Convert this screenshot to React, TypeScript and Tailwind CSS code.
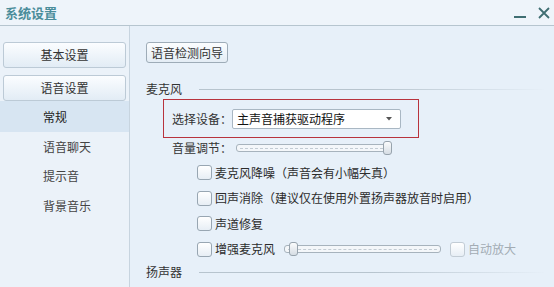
import React from 'react';

const font = { fontFamily: '"Noto Sans CJK SC", "Noto Sans", sans-serif' };

function Slider({ width, thumb }: { width: number; thumb: number }) {
  return (
    <div className="relative h-[14px] flex items-center" style={{ width }}>
      <div className="w-full h-[8px] rounded-[3px] border border-[#a7b3bd] bg-[#f4f7fa] flex items-center px-[3px]">
        <div className="w-full border-t border-dashed border-[#c3ccd4]" />
      </div>
      <div
        className="absolute top-0 w-[9px] h-[14px] rounded-[3px] border border-[#97a3ad] bg-gradient-to-b from-[#fbfcfd] to-[#d6dde4]"
        style={{ left: thumb }}
      />
    </div>
  );
}

function Check({ label, disabled }: { label: string; disabled?: boolean }) {
  return (
    <div className="flex items-center">
      <div
        className={
          'w-[15px] h-[15px] rounded-[3px] border bg-gradient-to-b from-white to-[#e7eef5] ' +
          (disabled ? 'border-[#c2ccd5]' : 'border-[#98a6b2]')
        }
      />
      <span className={'ml-[3px] text-[12px] leading-[16px] ' + (disabled ? 'text-[#a3acb4]' : 'text-[#2c2c2c]')}>
        {label}
      </span>
    </div>
  );
}

function SectionHead({ label }: { label: string }) {
  return (
    <div className="flex items-center h-[16px]">
      <span className="text-[12px] leading-[16px] text-[#333]">{label}</span>
      <div className="ml-[17px] mr-[10px] flex-1 h-px bg-gradient-to-r from-[#b7c4ce] via-[#b7c4ce] to-[#e6eff8]" />
    </div>
  );
}

export default function App() {
  return (
    <div className="w-[554px] h-[287px] overflow-hidden bg-[#e7f0f9] flex flex-col" style={font}>
      {/* title bar */}
      <div className="h-[26px] shrink-0 flex items-center justify-between pl-[5px] pr-[3px] bg-[#eef4fa] border-b border-[#b6c5cf]">
        <span className="text-[13px] font-bold text-[#4b8d9a] leading-none">系统设置</span>
        <div className="flex items-center gap-[11px] text-[#3f6e72]">
          <div className="w-[12px] h-[2px] bg-[#3f6e72] mt-[8px]" />
          <svg width="14" height="14" viewBox="0 0 14 14">
            <path d="M2 2 L12 12 M12 2 L2 12" stroke="#3f6e72" strokeWidth="1.8" />
          </svg>
        </div>
      </div>

      <div className="flex flex-1">
        {/* sidebar */}
        <div className="w-[130px] shrink-0 border-r border-[#c7d4df] bg-[#ebf2f9] pt-[16px] flex flex-col">
          <div className="mx-[3px] h-[26px] rounded-[3px] border border-[#bccad6] bg-gradient-to-b from-[#fbfdff] to-[#e2ecf5] flex items-center justify-center text-[12px] text-[#333]">
            基本设置
          </div>
          <div className="mx-[3px] mt-[7px] h-[26px] rounded-[3px] border border-[#bccad6] bg-gradient-to-b from-[#fbfdff] to-[#e2ecf5] flex items-center justify-center text-[12px] text-[#333]">
            语音设置
          </div>
          <div className="h-[31px] bg-[#d7e5f2] flex items-center pl-[43px] text-[12px] text-[#222]">常规</div>
          {['语音聊天', '提示音', '背景音乐'].map((t) => (
            <div key={t} className="h-[29.5px] flex items-center pl-[43px] text-[12px] text-[#444]">
              {t}
            </div>
          ))}
        </div>

        {/* content */}
        <div className="flex-1 pl-[16px] pt-[16px] flex flex-col">
          <div className="self-start h-[21px] px-[4px] rounded-[3px] border border-[#9eacb8] bg-gradient-to-b from-[#fbfdff] to-[#e4edf5] flex items-center text-[12px] text-[#333]">
            语音检测向导
          </div>

          <div className="mt-[18px]">
            <SectionHead label="麦克风" />
          </div>

          <div className="mt-[2px] ml-[17px] w-[256px] h-[39px] border border-[#b8333d] flex items-center pl-[8px]">
            <span className="w-[60px] text-[12px] text-[#333]">选择设备：</span>
            <div className="w-[169px] h-[20px] rounded-[2px] border border-[#a9b7c3] bg-white flex items-center justify-between pl-[4px] pr-[8px]">
              <span className="text-[12px] text-[#111]">主声音捕获驱动程序</span>
              <svg width="6" height="4" viewBox="0 0 6 4">
                <path d="M0 0 H6 L3 3.5 Z" fill="#555" />
              </svg>
            </div>
          </div>

          <div className="mt-[2px] ml-[26px] flex items-center h-[16px]">
            <span className="w-[64px] text-[12px] text-[#333]">音量调节：</span>
            <Slider width={156} thumb={147} />
          </div>

          <div className="mt-[4px] ml-[51px] flex flex-col">
            <div className="h-[25.5px] flex items-center">
              <Check label="麦克风降噪（声音会有小幅失真）" />
            </div>
            <div className="h-[25.5px] flex items-center">
              <Check label="回声消除（建议仅在使用外置扬声器放音时启用）" />
            </div>
            <div className="h-[25.5px] flex items-center">
              <Check label="声道修复" />
            </div>
            <div className="h-[25.5px] flex items-center">
              <Check label="增强麦克风" />
              <div className="ml-[9px]">
                <Slider width={157} thumb={5} />
              </div>
              <div className="ml-[9px]">
                <Check label="自动放大" disabled />
              </div>
            </div>
          </div>

          <div className="mt-[2px]">
            <SectionHead label="扬声器" />
          </div>
        </div>
      </div>
    </div>
  );
}
